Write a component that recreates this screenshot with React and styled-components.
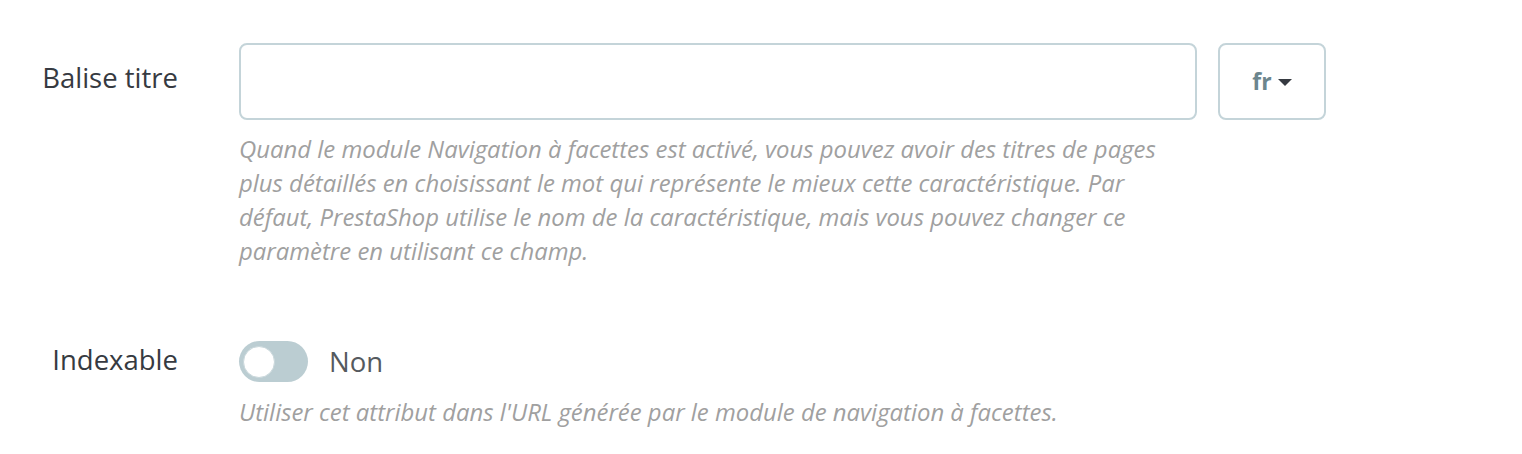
import React from "react";
import styled, { createGlobalStyle } from "styled-components";

const Global = createGlobalStyle`
  html, body { margin: 0; padding: 0; background: #ffffff; }
  body { font-family: "Open Sans", "Noto Sans", sans-serif; }
`;

const Page = styled.div`
  padding-top: 43px;
  display: flex;
  flex-direction: column;
  gap: 73px;
`;

const FormGroup = styled.div`
  display: grid;
  grid-template-columns: 178px 1fr;
  column-gap: 61px;
  align-items: start;
`;

const Label = styled.label`
  justify-self: end;
  font-size: 27.5px;
  line-height: 38px;
  color: #363a41;
  padding-top: ${(p) => p.$offset}px;
`;

const Field = styled.div`
  display: flex;
  flex-direction: column;
`;

const InputRow = styled.div`
  display: flex;
  gap: 21px;
`;

const TextInput = styled.input`
  box-sizing: border-box;
  width: 958px;
  height: 77px;
  border: 2px solid #c4d4d9;
  border-radius: 8px;
  background: #fff;
  outline: none;
  padding: 0 16px;
  font: inherit;
`;

const LangButton = styled.button`
  box-sizing: border-box;
  width: 108px;
  height: 77px;
  border: 2px solid #c4d4d9;
  border-radius: 8px;
  background: #fff;
  display: flex;
  align-items: center;
  justify-content: center;
  gap: 6px;
  font-family: "Open Sans", sans-serif;
  font-weight: 700;
  font-size: 23px;
  color: #6c868e;
  padding: 0;
  padding-bottom: 2px;
`;

const Caret = styled.span`
  width: 0;
  height: 0;
  border-left: 7px solid transparent;
  border-right: 7px solid transparent;
  border-top: 7px solid #363a41;
  margin-top: 3px;
`;

const Help = styled.p`
  margin: ${(p) => p.$mt}px 0 0;
  max-width: ${(p) => p.$maxw || "none"};
  font-style: italic;
  font-size: 23.9px;
  line-height: 34px;
  color: #a0a0a0;
`;

const SwitchRow = styled.div`
  display: flex;
  align-items: center;
  gap: 21px;
  height: 41px;
`;

const Track = styled.span`
  box-sizing: border-box;
  width: 69px;
  height: 41px;
  border-radius: 21px;
  background: #bbcdd2;
  display: flex;
  align-items: center;
  padding-left: 4px;
`;

const Knob = styled.span`
  box-sizing: border-box;
  width: 32px;
  height: 32px;
  border-radius: 50%;
  background: #fff;
  border: 1px solid #c9d7db;
`;

const SwitchText = styled.span`
  font-size: 27.5px;
  color: #555a5e;
  line-height: 41px;
`;

export default function App() {
  return (
    <>
      <Global />
      <Page>
        <FormGroup>
          <Label $offset={16}>Balise titre</Label>
          <Field>
            <InputRow>
              <TextInput type="text" />
              <LangButton type="button">
                fr <Caret />
              </LangButton>
            </InputRow>
            <Help $mt={12} $maxw="940px">
              Quand le module Navigation à facettes est activé, vous pouvez avoir des titres de pages
              plus détaillés en choisissant le mot qui représente le mieux cette caractéristique. Par
              défaut, PrestaShop utilise le nom de la caractéristique, mais vous pouvez changer ce
              paramètre en utilisant ce champ.
            </Help>
          </Field>
        </FormGroup>
        <FormGroup>
          <Label $offset={0}>Indexable</Label>
          <Field>
            <SwitchRow>
              <Track>
                <Knob />
              </Track>
              <SwitchText>Non</SwitchText>
            </SwitchRow>
            <Help $mt={13}>
              Utiliser cet attribut dans l'URL générée par le module de navigation à facettes.
            </Help>
          </Field>
        </FormGroup>
      </Page>
    </>
  );
}
